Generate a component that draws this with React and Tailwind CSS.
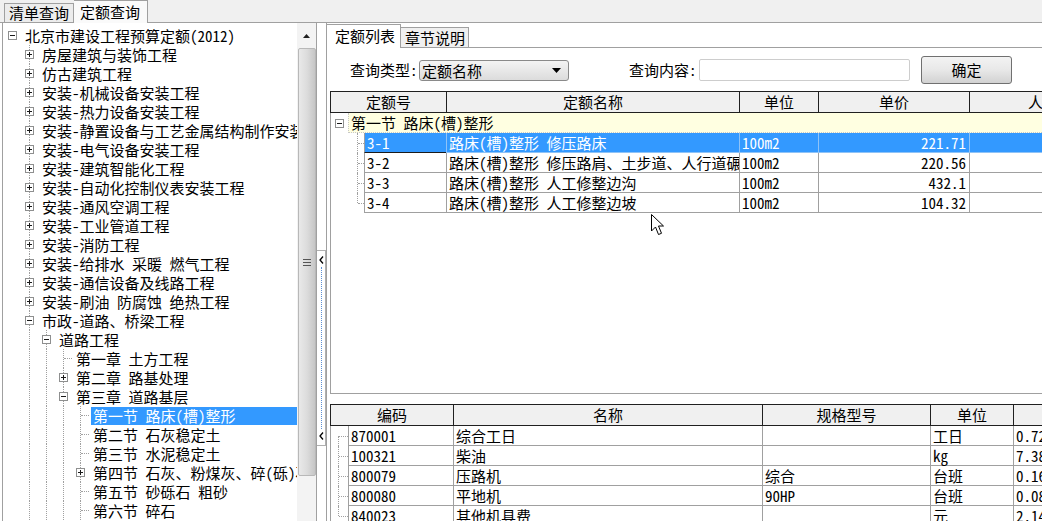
import React from "react";

const TREE = [
    { l: 0, t: "北京市建设工程预算定额(2012)", k: "minus" },
    { l: 1, t: "房屋建筑与装饰工程", k: "plus" },
    { l: 1, t: "仿古建筑工程", k: "plus" },
    { l: 1, t: "安装-机械设备安装工程", k: "plus" },
    { l: 1, t: "安装-热力设备安装工程", k: "plus" },
    { l: 1, t: "安装-静置设备与工艺金属结构制作安装工程", k: "plus" },
    { l: 1, t: "安装-电气设备安装工程", k: "plus" },
    { l: 1, t: "安装-建筑智能化工程", k: "plus" },
    { l: 1, t: "安装-自动化控制仪表安装工程", k: "plus" },
    { l: 1, t: "安装-通风空调工程", k: "plus" },
    { l: 1, t: "安装-工业管道工程", k: "plus" },
    { l: 1, t: "安装-消防工程", k: "plus" },
    { l: 1, t: "安装-给排水 采暖 燃气工程", k: "plus" },
    { l: 1, t: "安装-通信设备及线路工程", k: "plus" },
    { l: 1, t: "安装-刷油 防腐蚀 绝热工程", k: "plus" },
    { l: 1, t: "市政-道路、桥梁工程", k: "minus" },
    { l: 2, t: "道路工程", k: "minus" },
    { l: 3, t: "第一章 土方工程", k: "leaf" },
    { l: 3, t: "第二章 路基处理", k: "plus" },
    { l: 3, t: "第三章 道路基层", k: "minus" },
    { l: 4, t: "第一节 路床(槽)整形", k: "leaf", sel: true },
    { l: 4, t: "第二节 石灰稳定土", k: "leaf" },
    { l: 4, t: "第三节 水泥稳定土", k: "leaf" },
    { l: 4, t: "第四节 石灰、粉煤灰、碎(砾)石", k: "plus" },
    { l: 4, t: "第五节 砂砾石 粗砂", k: "leaf" },
    { l: 4, t: "第六节 碎石", k: "leaf" },
];

const QUOTAS = [
    { code: "3-1", name: "路床(槽)整形 修压路床", unit: "100m2", price: "221.71", sel: true },
    { code: "3-2", name: "路床(槽)整形 修压路肩、土步道、人行道碾压", unit: "100m2", price: "220.56" },
    { code: "3-3", name: "路床(槽)整形 人工修整边沟", unit: "100m2", price: "432.1" },
    { code: "3-4", name: "路床(槽)整形 人工修整边坡", unit: "100m2", price: "104.32" },
];

const RES = [
    { code: "870001", name: "综合工日", spec: "", unit: "工日", qty: "0.7200" },
    { code: "100321", name: "柴油", spec: "", unit: "kg", qty: "7.3800" },
    { code: "800079", name: "压路机", spec: "综合", unit: "台班", qty: "0.1600" },
    { code: "800080", name: "平地机", spec: "90HP", unit: "台班", qty: "0.0800" },
    { code: "840023", name: "其他机具费", spec: "", unit: "元", qty: "2.1400" },
];

function Box({ open }) {
    return (
        <svg width="9" height="9" viewBox="0 0 9 9" className="relative">
            <rect x="0.5" y="0.5" width="8" height="8" fill="#fff" stroke="#8e8f8f" />
            <line x1="2" y1="4.5" x2="7" y2="4.5" stroke="#1a1a1a" />
            {!open && <line x1="4.5" y1="2" x2="4.5" y2="7" stroke="#1a1a1a" />}
        </svg>
    );
}

function TreeRow({ node }) {
    const guides = [];
    for (let i = 0; i < node.l; i++) {
        guides.push(
            <div key={i} className="w-[17px] h-full flex justify-center shrink-0">
                {i > 0 && <div className="h-full border-l border-dotted border-[#a0a0a0]" />}
            </div>
        );
    }
    return (
        <div className="flex h-[19px] items-center">
            {guides}
            <div className="w-[17px] h-full relative flex items-center justify-center shrink-0">
                {node.l > 0 && <div className="absolute left-[8px] top-0 h-full border-l border-dotted border-[#a0a0a0]" />}
                {node.k === "leaf" ? (
                    <div className="absolute left-[9px] top-[9px] w-[8px] border-t border-dotted border-[#a0a0a0]" />
                ) : (
                    <Box open={node.k === "minus"} />
                )}
            </div>
            <div
                className={
                    "ml-[2px] pl-[2px] h-[18px] leading-[18px] whitespace-nowrap flex-1 " +
                    (node.sel ? "bg-[#3399ff] text-white" : "")
                }
            >
                {node.t}
            </div>
        </div>
    );
}

function Chevron() {
    return (
        <svg width="5" height="8" viewBox="0 0 5 8">
            <path d="M4 0.5 L1 4 L4 7.5" fill="none" stroke="#000" strokeWidth="1.3" />
        </svg>
    );
}

function LeftPanel() {
    return (
        <div className="flex h-full pl-[2px] shrink-0">
            <div className="w-[295px] h-full border-l border-[#a0a0a0] bg-white overflow-hidden pt-[3px] pl-[1px]">
                {TREE.map((n, i) => (
                    <TreeRow key={i} node={n} />
                ))}
            </div>
            <div className="w-[20px] h-full bg-[#f3f3f3] flex flex-col items-center border-r border-[#a0a0a0]">
                <div className="h-[25px] w-full flex items-center justify-center">
                    <svg width="7" height="4" viewBox="0 0 7 4">
                        <path d="M0 4 L3.5 0 L7 4 Z" fill="#202020" />
                    </svg>
                </div>
                <div className="h-[428px] w-[18px] rounded-[2px] border border-[#b8b8b8] bg-gradient-to-r from-[#e9e9e9] via-[#dcdcdc] to-[#c6c6c6] flex flex-col items-center justify-center gap-[2px]">
                    <div className="w-[8px] border-t border-[#555]" />
                    <div className="w-[8px] border-t border-[#555]" />
                    <div className="w-[8px] border-t border-[#555]" />
                </div>
            </div>
        </div>
    );
}

function Splitter() {
    return (
        <div className="w-[9px] h-full bg-white shrink-0 pt-[227px]">
            <div className="h-[196px] w-[9px] border-y border-r border-[#b0b0b0] flex flex-col items-center py-[5px]">
                <Chevron />
                <div className="flex-1 mt-[3px] mb-[3px] border-l border-dotted border-[#5b8fd4]" />
                <Chevron />
            </div>
        </div>
    );
}

function QueryRow() {
    return (
        <div className="flex items-center h-[28px] mt-[8px] pl-[23px]">
            <span className="w-[69px] whitespace-nowrap shrink-0">查询类型:</span>
            <div className="w-[150px] h-[21px] shrink-0 rounded-[3px] border border-[#8a8a8a] bg-gradient-to-b from-[#f4f4f4] to-[#dcdcdc] flex items-center pl-[2px] pr-[7px]">
                <span className="flex-1 leading-[19px]">定额名称</span>
                <svg width="9" height="5" viewBox="0 0 9 5">
                    <path d="M0 0 L9 0 L4.5 5 Z" fill="#000" />
                </svg>
            </div>
            <span className="ml-[60px] w-[70px] whitespace-nowrap shrink-0">查询内容:</span>
            <div className="w-[211px] h-[22px] shrink-0 rounded-[2px] border border-[#cdcdcd] bg-white" />
            <div className="ml-[11px] w-[91px] h-[28px] shrink-0 rounded-[3px] border border-[#707070] bg-gradient-to-b from-[#f3f3f3] via-[#e8e8e8] to-[#d2d2d2] flex items-center justify-center">
                确定
            </div>
        </div>
    );
}

function QuotaGrid() {
    return (
        <div className="ml-[3px] h-[303px] border-b border-[#a0a0a0] flex flex-col shrink-0">
            <div className="flex h-[22px] border-y border-[#202020] bg-[#f0f0f0] shrink-0">
                <div className="w-[116px] shrink-0 border-l border-[#202020] text-center leading-[20px]">定额号</div>
                <div className="w-[293px] shrink-0 border-l border-[#202020] text-center leading-[20px]">定额名称</div>
                <div className="w-[79px] shrink-0 border-l border-[#202020] text-center leading-[20px]">单位</div>
                <div className="w-[151px] shrink-0 border-l border-[#202020] text-center leading-[20px]">单价</div>
                <div className="w-[162px] shrink-0 border-l border-[#202020] text-center leading-[20px] whitespace-nowrap">人工费</div>
            </div>
            <div className="flex-1 border-l border-[#a0a0a0] bg-white">
                <div className="flex h-[20px]">
                    <div className="w-[17px] flex items-center justify-center shrink-0">
                        <Box open />
                    </div>
                    <div className="flex-1 bg-[#ffffe1] border-b border-l border-dotted border-[#c8c8c8] pl-[2px] leading-[19px] whitespace-nowrap">
                        第一节 路床(槽)整形
                    </div>
                </div>
                {QUOTAS.map((r, i) => {
                    const cell = r.sel ? "border-[#8fc3f7]" : "border-[#a0a0a0]";
                    return (
                        <div key={r.code} className={"flex h-[20px] " + (r.sel ? "text-white" : "")}>
                            <div className="w-[33px] relative shrink-0">
                                <div
                                    className={
                                        "absolute left-[26px] top-0 border-l border-dotted border-[#a0a0a0] " +
                                        (i === QUOTAS.length - 1 ? "h-[10px]" : "h-full")
                                    }
                                />
                                <div className="absolute left-[27px] top-[10px] w-[6px] border-t border-dotted border-[#a0a0a0]" />
                            </div>
                            <div className={"flex flex-1 " + (r.sel ? "bg-[#3399ff]" : "")}>
                                <div className={"w-[82px] shrink-0 border-l border-b pl-[2px] leading-[19px] " + (r.sel ? "border-[#1a1a1a] border-l-[#a0a0a0]" : "border-[#a0a0a0]")}>
                                    {r.code}
                                </div>
                                <div className={"w-[293px] shrink-0 border-l border-b pl-[2px] leading-[19px] whitespace-nowrap overflow-hidden " + cell}>
                                    {r.name}
                                </div>
                                <div className={"w-[79px] shrink-0 border-l border-b pl-[2px] leading-[19px] " + cell}>{r.unit}</div>
                                <div className={"w-[151px] shrink-0 border-l border-b pr-[3px] text-right leading-[19px] " + cell}>
                                    {r.price}
                                </div>
                                <div className={"w-[162px] shrink-0 border-l border-b " + cell} />
                            </div>
                        </div>
                    );
                })}
            </div>
        </div>
    );
}

function ResourceGrid() {
    return (
        <div className="ml-[3px] mt-[10px] flex flex-col flex-1 overflow-hidden">
            <div className="flex h-[22px] border-y border-[#202020] bg-[#f0f0f0] shrink-0">
                <div className="w-[123px] shrink-0 border-l border-[#202020] text-center leading-[20px]">编码</div>
                <div className="w-[309px] shrink-0 border-l border-[#202020] text-center leading-[20px]">名称</div>
                <div className="w-[168px] shrink-0 border-l border-[#202020] text-center leading-[20px]">规格型号</div>
                <div className="w-[83px] shrink-0 border-l border-[#202020] text-center leading-[20px]">单位</div>
                <div className="w-[100px] shrink-0 border-l border-[#202020] text-center leading-[20px]">数量</div>
            </div>
            <div className="flex-1 border-l border-[#a0a0a0] bg-white">
                {RES.map((r, i) => (
                    <div key={r.code} className="flex h-[20px]">
                        <div className="w-[17px] relative shrink-0">
                            <div
                                className={
                                    "absolute left-[7px] border-l border-dotted border-[#a0a0a0] " +
                                    (i === 0 ? "top-[10px] h-[10px]" : i === RES.length - 1 ? "top-0 h-[10px]" : "top-0 h-full")
                                }
                            />
                            <div className="absolute left-[8px] top-[10px] w-[9px] border-t border-dotted border-[#a0a0a0]" />
                        </div>
                        <div className="w-[105px] shrink-0 border-l border-b border-[#a0a0a0] pl-[2px] leading-[19px]">{r.code}</div>
                        <div className="w-[309px] shrink-0 border-l border-b border-[#a0a0a0] pl-[2px] leading-[19px]">{r.name}</div>
                        <div className="w-[168px] shrink-0 border-l border-b border-[#a0a0a0] pl-[2px] leading-[19px]">{r.spec}</div>
                        <div className="w-[83px] shrink-0 border-l border-b border-[#a0a0a0] pl-[2px] leading-[19px]">{r.unit}</div>
                        <div className="w-[100px] shrink-0 border-l border-b border-[#a0a0a0] pl-[2px] leading-[19px]">{r.qty}</div>
                    </div>
                ))}
            </div>
        </div>
    );
}

function RightPanel() {
    return (
        <div className="flex-1 min-w-0 h-full border-l border-[#a0a0a0] bg-white flex flex-col overflow-hidden">
            <div className="flex items-end h-[25px] shrink-0">
                <div className="w-[74px] h-[24px] shrink-0 border-t border-r border-[#a0a0a0] bg-white pl-[8px] leading-[22px]">
                    定额列表
                </div>
                <div className="w-[68px] h-[21px] shrink-0 border-t border-r border-b border-[#a0a0a0] bg-[#f0f0f0] pl-[4px] leading-[19px]">
                    章节说明
                </div>
                <div className="flex-1 h-full border-b border-[#a0a0a0]" />
            </div>
            <QueryRow />
            <div className="mt-[7px] flex flex-col flex-1 overflow-hidden">
                <QuotaGrid />
                <ResourceGrid />
            </div>
        </div>
    );
}

function Cursor() {
    return (
        <svg width="14" height="22" viewBox="0 0 14 22" className="absolute left-[651px] top-[214px]">
            <path
                d="M0.5 0.5 L0.5 17 L4.5 13 L7.5 20.5 L10.5 19.3 L7.5 12 L12.5 12 Z"
                fill="#fff"
                stroke="#000"
                strokeLinejoin="round"
            />
        </svg>
    );
}

export default function App() {
    return (
        <div className="relative w-[1042px] h-[521px] overflow-hidden bg-white text-[15px] text-black font-['Noto_Sans_Mono_CJK_SC','Noto_Sans_CJK_SC',sans-serif]">
            <div className="flex items-end h-[23px] pl-[4px] bg-[#f0f0f0] border-b border-[#a0a0a0]">
                <div className="w-[70px] h-[19px] border-t border-l border-r border-[#a0a0a0] bg-[#ececec] pl-[4px] leading-[18px]">
                    清单查询
                </div>
                <div className="w-[74px] h-[23px] -mb-px border-t border-r border-[#a0a0a0] bg-[#fafafa] pl-[6px] leading-[21px]">
                    定额查询
                </div>
            </div>
            <div className="flex h-[498px]">
                <LeftPanel />
                <Splitter />
                <RightPanel />
            </div>
            <Cursor />
        </div>
    );
}
